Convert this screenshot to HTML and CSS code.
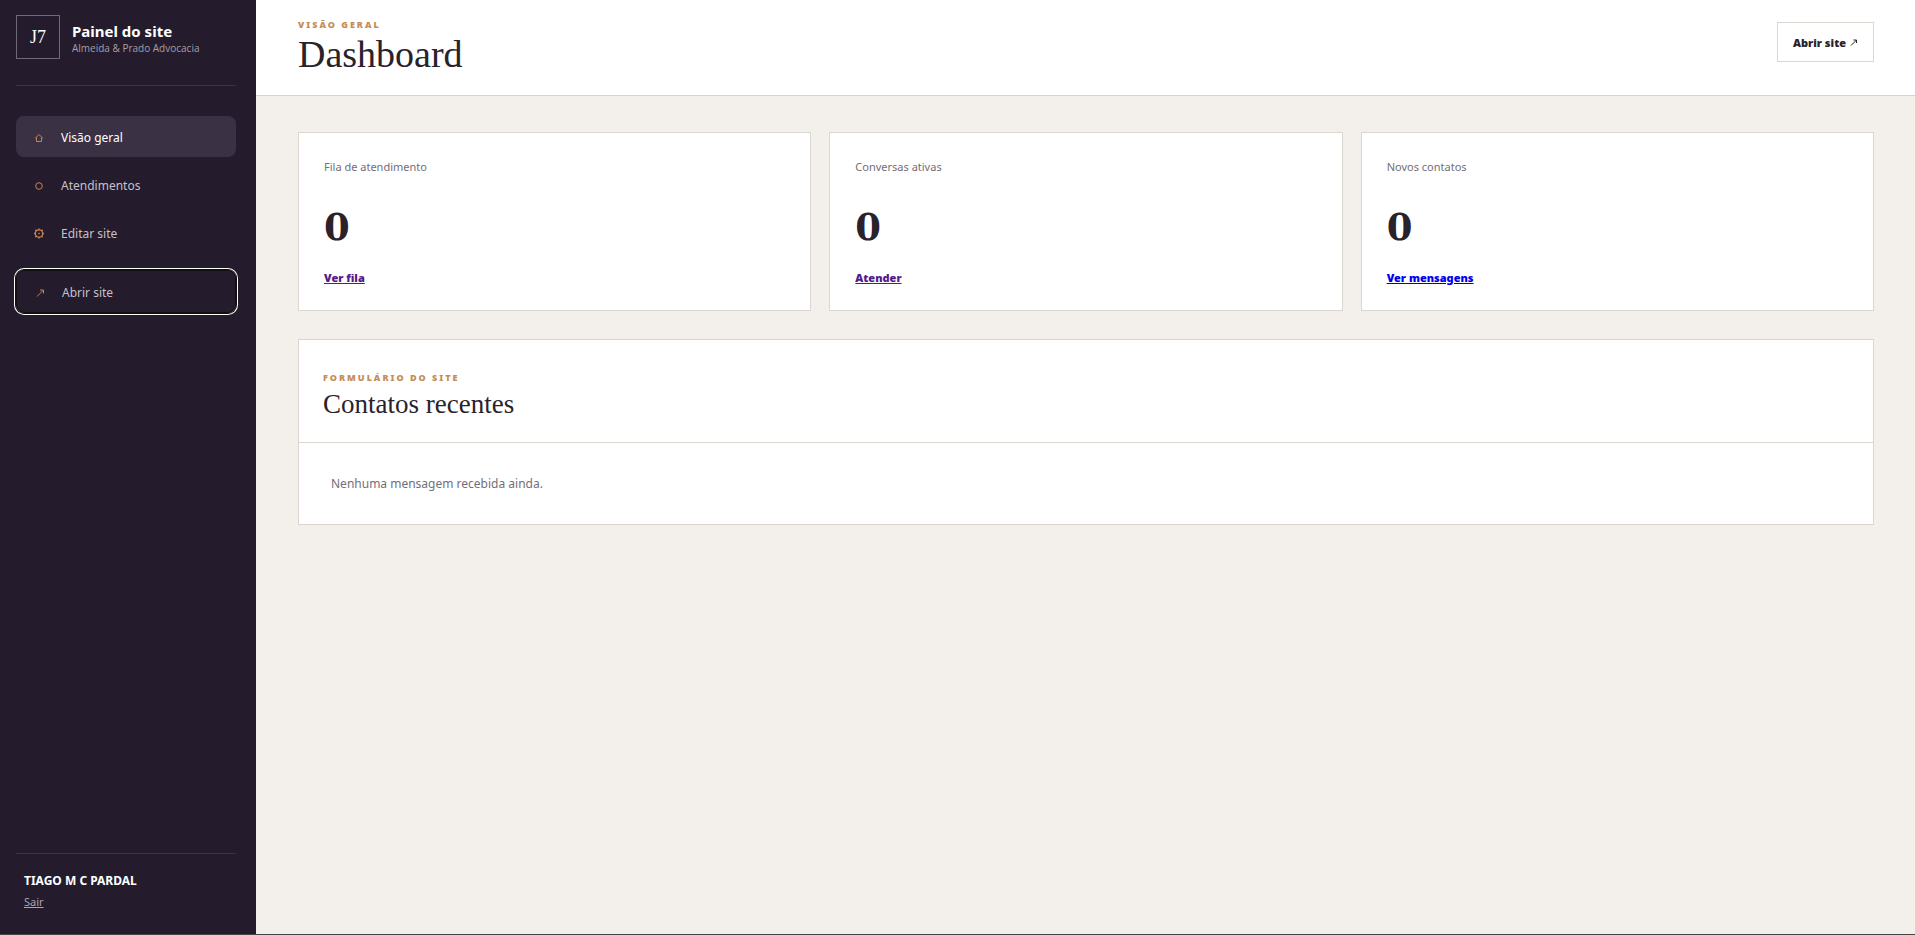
FILE: index.html
```html
<!DOCTYPE html>
<html lang="pt-BR">
<head>
<meta charset="utf-8">
<title>Painel do site</title>
<meta name="viewport" content="width=device-width, initial-scale=1">
<link rel="stylesheet" href="styles.css">
</head>
<body>
<div class="app">
  <aside class="sidebar">
    <div class="brand">
      <span class="brand-mark">J7</span>
      <div class="brand-text">
        <strong class="brand-name">Painel do site</strong>
        <span class="brand-sub">Almeida &amp; Prado Advocacia</span>
      </div>
    </div>
    <nav class="nav">
      <a class="nav-item active" href="#">
        <svg class="icon" viewBox="0 0 14 14"><path d="M4.500 10.500V7H3.500L7 3.500 10.500 7h-1v3.500z"/></svg>
        Visão geral
      </a>
      <a class="nav-item" href="#">
        <svg class="icon" viewBox="0 0 14 14"><circle cx="7" cy="7" r="3.300"/></svg>
        Atendimentos
      </a>
      <a class="nav-item" href="#">
        <svg class="icon" viewBox="0 0 14 14"><circle cx="7" cy="6.500" r="3.700" stroke-width="1.200"/><circle cx="7" cy="6.500" r=".5"/><path d="M7 2.800V1.500M7 11.500v-1.300M3.300 6.500H2M12 6.500h-1.300M4.400 3.900l-1-1M10.600 10.100l-1-1M9.600 3.900l1-1M3.400 10.100l1-1" stroke-width="1.500"/></svg>
        Editar site
      </a>
      <button class="nav-item nav-open" type="button">
        <svg class="icon" viewBox="0 0 14 14"><path d="M4 10.500l6.500-6.500M7 4h3.500v3.500"/></svg>
        Abrir site
      </button>
    </nav>
    <div class="account">
      <strong class="account-name">TIAGO M C PARDAL</strong>
      <a class="logout" href="#">Sair</a>
    </div>
  </aside>
  <div class="page">
    <header class="topbar">
      <div>
        <p class="eyebrow">VISÃO GERAL</p>
        <h1 class="title">Dashboard</h1>
      </div>
      <a class="open-site" href="#">Abrir site
        <svg class="arrow" viewBox="0 0 8 8"><path d="M1 7.500l5.500-5.500M3.500 2h3v3"/></svg>
      </a>
    </header>
    <main class="content">
      <section class="cards">
        <article class="card">
          <span class="card-label">Fila de atendimento</span>
          <strong class="card-value">0</strong>
          <a class="card-link visited" href="#">Ver fila</a>
        </article>
        <article class="card">
          <span class="card-label">Conversas ativas</span>
          <strong class="card-value">0</strong>
          <a class="card-link visited" href="#">Atender</a>
        </article>
        <article class="card">
          <span class="card-label">Novos contatos</span>
          <strong class="card-value">0</strong>
          <a class="card-link" href="#">Ver mensagens</a>
        </article>
      </section>
      <section class="panel">
        <header class="panel-head">
          <p class="eyebrow">FORMULÁRIO DO SITE</p>
          <h2 class="panel-title">Contatos recentes</h2>
        </header>
        <p class="empty">Nenhuma mensagem recebida ainda.</p>
      </section>
    </main>
  </div>
</div>
</body>
</html>
```
FILE: styles.css
```css
* { box-sizing: border-box; }

body {
  margin: 0;
  background: #f3efeb;
  color: #29222b;
  font-family: "Noto Sans", "Open Sans", sans-serif;
  font-size: 13px;
}

p, h1, h2 { margin: 0; }

.app {
  display: grid;
  grid-template-columns: 256px 1fr;
  min-height: 100vh;
  border-bottom: 1px solid #48454a;
}

.sidebar {
  display: flex;
  flex-direction: column;
  padding: 15px 20px 23px 16px;
  background: #241b2d;
  color: #fff;
}

.brand {
  display: flex;
  align-items: center;
  gap: 12px;
  padding-bottom: 26px;
  border-bottom: 1px solid #3c3345;
}

.brand-mark {
  display: grid;
  place-items: center;
  width: 44px;
  height: 44px;
  border: 1px solid #716979;
  font: 18px "Liberation Serif", serif;
}

.brand-text { display: grid; padding-top: 2px; }
.brand-name { font-size: 15px; line-height: 20px; }
.brand-sub { color: #a49fa8; font-family: "Open Sans", sans-serif; font-size: 10px; line-height: 14px; }

.nav {
  display: grid;
  gap: 7px;
  margin-top: 30px;
}

.nav-item {
  display: flex;
  align-items: center;
  gap: 15px;
  padding: 2px 16px 0;
  height: 41px;
  border: 0;
  border-radius: 8px;
  background: none;
  color: #c5c0c9;
  font: 12px "Noto Sans", sans-serif;
  text-decoration: none;
}

.nav-item.active { background: #3b3144; color: #fff; }

.nav-open {
  height: 43px;
  margin-top: 10px;
  border: 1px solid #101010;
  box-shadow: 0 0 0 1px #101010, 0 0 0 2px #fff;
}

.icon {
  width: 14px;
  height: 14px;
  fill: none;
  stroke: #c8844f;
}

.account {
  display: grid;
  justify-items: start;
  gap: 3px;
  margin-top: auto;
  padding: 18px 8px 0;
  border-top: 1px solid #3c3345;
  font-size: 12px;
  line-height: 18px;
}

.account-name { font-size: 12px; }
.logout { color: #a9a4ad; font-size: 11px; }

.topbar {
  display: flex;
  justify-content: space-between;
  align-items: flex-start;
  height: 96px;
  padding: 18px 41px 0 42px;
  border-bottom: 1px solid #d9d4d0;
  background: #fff;
}

.eyebrow {
  color: #c58d57;
  font-size: 9px;
  font-weight: 900;
  line-height: 14px;
  letter-spacing: 2px;
}

.title {
  font: 38px/44px "Liberation Serif", serif;
}

.open-site {
  display: flex;
  align-items: center;
  gap: 4px;
  height: 40px;
  margin-top: 4px;
  padding: 0 15px;
  border: 1px solid #ddd5cf;
  color: #29222b;
  font-size: 11px;
  font-weight: 900;
  text-decoration: none;
}

.arrow {
  width: 8px;
  height: 8px;
  fill: none;
  stroke: #29222b;
}

.content { padding: 36px 41px 36px 42px; }

.cards {
  display: grid;
  grid-template-columns: repeat(3, 1fr);
  gap: 18px;
}

.card {
  display: grid;
  justify-items: start;
  padding: 25px 25px 23px;
  border: 1px solid #dcd6d0;
  background: #fff;
}

.card-label { color: #746e77; font-size: 11px; line-height: 18px; }
.card-value { margin: 21px 0 12px; font: bold 37px/60px "DejaVu Serif", serif; }
.card-link { color: #00e; font-size: 11px; font-weight: 900; line-height: 18px; }
.card-link.visited { color: #551a8b; }

.panel {
  margin-top: 28px;
  border: 1px solid #dcd6d0;
  background: #fff;
}

.panel-head {
  padding: 31px 24px 20px;
  border-bottom: 1px solid #dcd6d0;
}

.panel-title { padding-top: 1px; font: 27px/36px "Liberation Serif", serif; }
.empty { padding: 32px 32px 31px; color: #746e77; font-size: 12px; line-height: 18px; }
```
